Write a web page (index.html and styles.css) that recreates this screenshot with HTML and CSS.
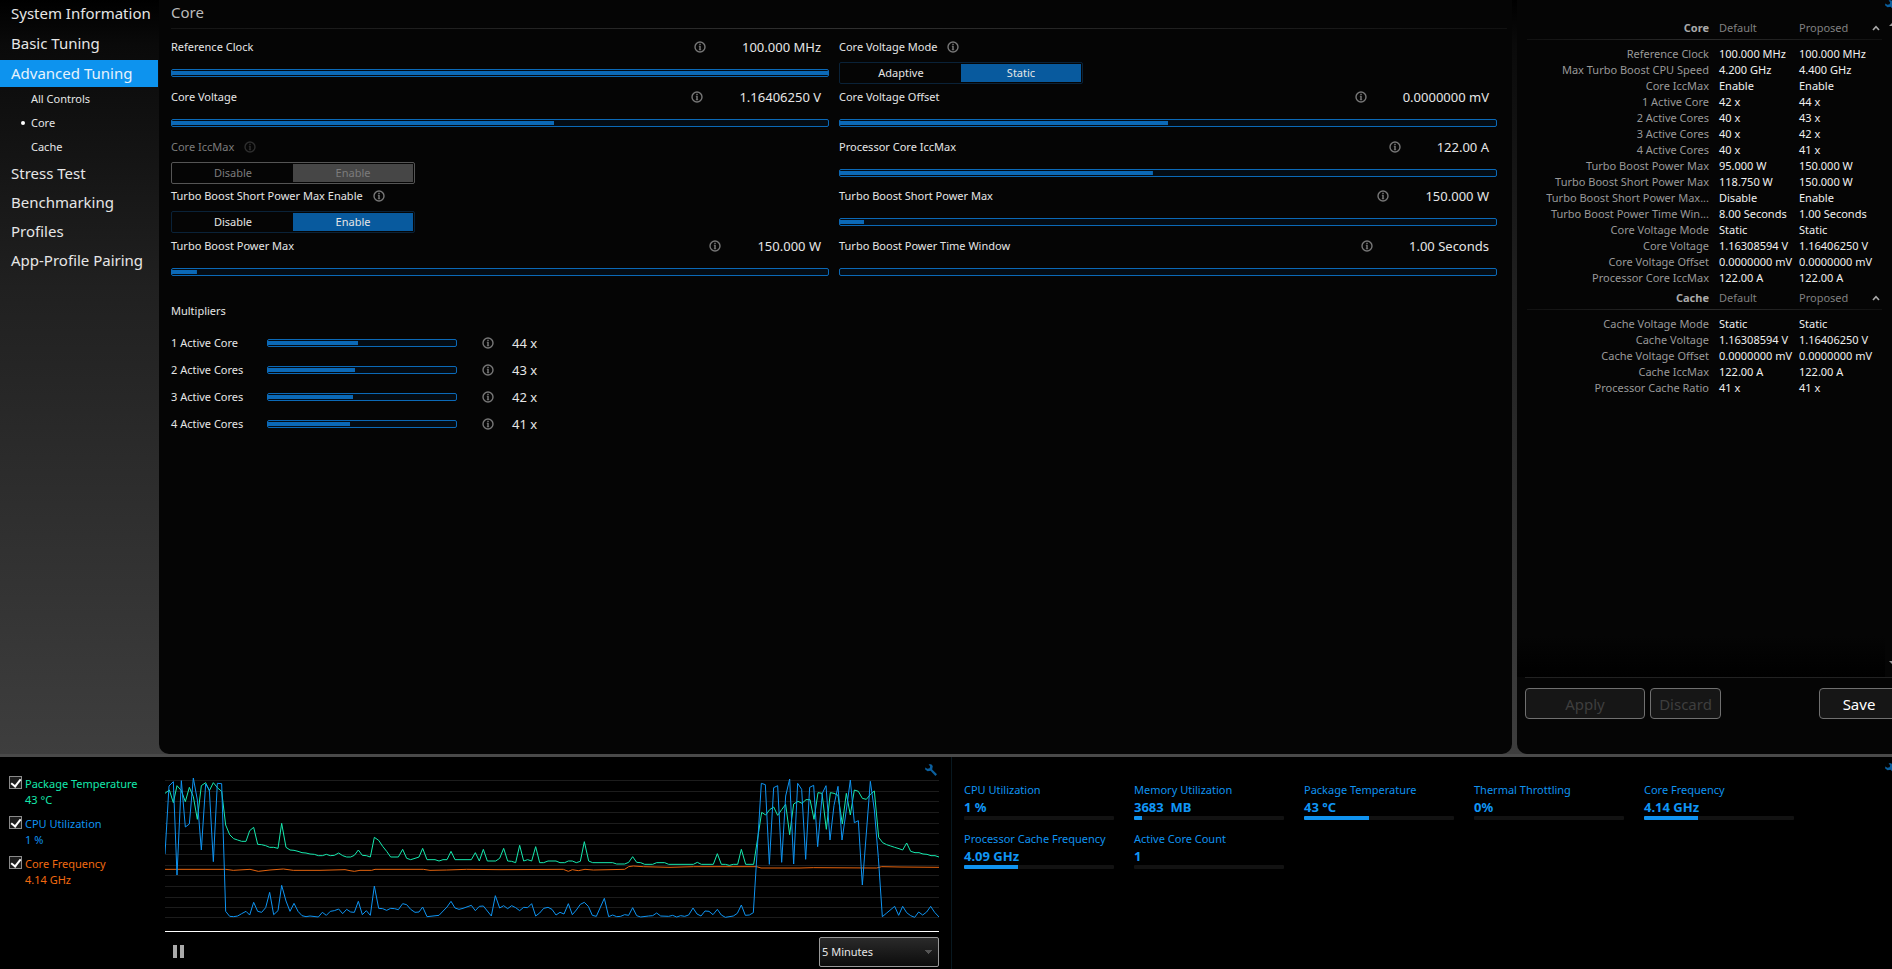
FILE: index.html
```html
<!DOCTYPE html>
<html lang="en">
<head>
<meta charset="utf-8">
<title>Advanced Tuning - Core</title>
<link rel="stylesheet" href="styles.css">
</head>
<body>
<svg class="defs" aria-hidden="true">
  <symbol id="info" viewBox="0 0 12 12"><circle cx="6" cy="6" r="5" fill="none" stroke="currentColor" stroke-width="1.4"/><path d="M6 5v4M6 2.800v1.400" fill="none" stroke="currentColor" stroke-width="1.5"/><path d="M4.800 5.300H6M4.800 8.800h2.400" fill="none" stroke="currentColor" stroke-width=".8"/></symbol>
  <symbol id="wrench" viewBox="0 0 12 12"><path d="M3.600.3H6.200L7.800 2 7.200 5.400 12 10.200 10.400 12 5.600 6.800 2.600 7.200.2 5.400V3.400L2.400 4.800 4.600 4.200 5.200 2.400Z" fill="currentColor"/></symbol>
  <symbol id="chevron" viewBox="0 0 8 6"><path d="M1 5 4 1.600 7 5" fill="none" stroke="currentColor" stroke-width="1.6"/></symbol>
</svg>
<div class="app">
  <div class="top">
    <nav class="sidebar">
      <a class="nav-item" href="#">System Information</a>
      <a class="nav-item" href="#">Basic Tuning</a>
      <a class="nav-item active" href="#">Advanced Tuning</a>
      <div class="subnav">
        <a class="sub-item" href="#">All Controls</a>
        <a class="sub-item current" href="#">Core</a>
        <a class="sub-item" href="#">Cache</a>
      </div>
      <a class="nav-item lower" href="#">Stress Test</a>
      <a class="nav-item lower" href="#">Benchmarking</a>
      <a class="nav-item lower" href="#">Profiles</a>
      <a class="nav-item lower" href="#">App-Profile Pairing</a>
    </nav>

    <main class="main">
      <h1 class="title">Core</h1>
      <div class="controls">
        <div class="column">
          <div class="control">
            <div class="head"><label for="clock">Reference Clock</label><svg class="info"><use href="#info"/></svg><output class="value">100.000 MHz</output></div>
            <input class="slider" id="clock" type="range" style="--fill:100%">
          </div>
          <div class="control">
            <div class="head"><label for="volt">Core Voltage</label><svg class="info"><use href="#info"/></svg><output class="value">1.16406250 V</output></div>
            <input class="slider" id="volt" type="range" style="--fill:58.3%">
          </div>
          <div class="control short disabled">
            <div class="head inline"><span>Core IccMax</span><svg class="info"><use href="#info"/></svg></div>
            <div class="toggle" role="group" aria-label="Core IccMax"><button disabled>Disable</button><button class="on" disabled>Enable</button></div>
          </div>
          <div class="control">
            <div class="head inline"><span>Turbo Boost Short Power Max Enable</span><svg class="info"><use href="#info"/></svg></div>
            <div class="toggle" role="group" aria-label="Turbo Boost Short Power Max Enable"><button>Disable</button><button class="on">Enable</button></div>
          </div>
          <div class="control">
            <div class="head"><label for="tbpm">Turbo Boost Power Max</label><svg class="info"><use href="#info"/></svg><output class="value">150.000 W</output></div>
            <input class="slider" id="tbpm" type="range" style="--fill:3.8%">
          </div>
        </div>
        <div class="column">
          <div class="control">
            <div class="head inline"><span>Core Voltage Mode</span><svg class="info"><use href="#info"/></svg></div>
            <div class="toggle" role="group" aria-label="Core Voltage Mode"><button>Adaptive</button><button class="on">Static</button></div>
          </div>
          <div class="control">
            <div class="head"><label for="offset">Core Voltage Offset</label><svg class="info"><use href="#info"/></svg><output class="value">0.0000000 mV</output></div>
            <input class="slider" id="offset" type="range" style="--fill:50%">
          </div>
          <div class="control short">
            <div class="head"><label for="icc">Processor Core IccMax</label><svg class="info"><use href="#info"/></svg><output class="value">122.00 A</output></div>
            <input class="slider" id="icc" type="range" style="--fill:47.7%">
          </div>
          <div class="control">
            <div class="head"><label for="tbsp">Turbo Boost Short Power Max</label><svg class="info"><use href="#info"/></svg><output class="value">150.000 W</output></div>
            <input class="slider" id="tbsp" type="range" style="--fill:3.7%">
          </div>
          <div class="control">
            <div class="head"><label for="window">Turbo Boost Power Time Window</label><svg class="info"><use href="#info"/></svg><output class="value">1.00 Seconds</output></div>
            <input class="slider" id="window" type="range" style="--fill:0%">
          </div>
        </div>
      </div>
      <section class="multipliers">
        <h2>Multipliers</h2>
        <div class="mult"><label for="m1">1 Active Core</label><input class="slider" id="m1" type="range" style="--fill:48%"><svg class="info"><use href="#info"/></svg><output class="value">44 x</output></div>
        <div class="mult"><label for="m2">2 Active Cores</label><input class="slider" id="m2" type="range" style="--fill:46.4%"><svg class="info"><use href="#info"/></svg><output class="value">43 x</output></div>
        <div class="mult"><label for="m3">3 Active Cores</label><input class="slider" id="m3" type="range" style="--fill:45.3%"><svg class="info"><use href="#info"/></svg><output class="value">42 x</output></div>
        <div class="mult"><label for="m4">4 Active Cores</label><input class="slider" id="m4" type="range" style="--fill:43.8%"><svg class="info"><use href="#info"/></svg><output class="value">41 x</output></div>
      </section>
    </main>

    <aside class="summary">
      <div class="summary-inner">
        <div class="lists">
          <table>
            <thead><tr><th class="name">Core</th><th>Default</th><th>Proposed<svg class="chevron"><use href="#chevron"/></svg></th></tr></thead>
            <tbody>
              <tr><th>Reference Clock</th><td>100.000 MHz</td><td>100.000 MHz</td></tr>
              <tr><th>Max Turbo Boost CPU Speed</th><td>4.200 GHz</td><td>4.400 GHz</td></tr>
              <tr><th>Core IccMax</th><td>Enable</td><td>Enable</td></tr>
              <tr><th>1 Active Core</th><td>42 x</td><td>44 x</td></tr>
              <tr><th>2 Active Cores</th><td>40 x</td><td>43 x</td></tr>
              <tr><th>3 Active Cores</th><td>40 x</td><td>42 x</td></tr>
              <tr><th>4 Active Cores</th><td>40 x</td><td>41 x</td></tr>
              <tr><th>Turbo Boost Power Max</th><td>95.000 W</td><td>150.000 W</td></tr>
              <tr><th>Turbo Boost Short Power Max</th><td>118.750 W</td><td>150.000 W</td></tr>
              <tr><th>Turbo Boost Short Power Max...</th><td>Disable</td><td>Enable</td></tr>
              <tr><th>Turbo Boost Power Time Win...</th><td>8.00 Seconds</td><td>1.00 Seconds</td></tr>
              <tr><th>Core Voltage Mode</th><td>Static</td><td>Static</td></tr>
              <tr><th>Core Voltage</th><td>1.16308594 V</td><td>1.16406250 V</td></tr>
              <tr><th>Core Voltage Offset</th><td>0.0000000 mV</td><td>0.0000000 mV</td></tr>
              <tr><th>Processor Core IccMax</th><td>122.00 A</td><td>122.00 A</td></tr>
            </tbody>
          </table>
          <table>
            <thead><tr><th class="name">Cache</th><th>Default</th><th>Proposed<svg class="chevron"><use href="#chevron"/></svg></th></tr></thead>
            <tbody>
              <tr><th>Cache Voltage Mode</th><td>Static</td><td>Static</td></tr>
              <tr><th>Cache Voltage</th><td>1.16308594 V</td><td>1.16406250 V</td></tr>
              <tr><th>Cache Voltage Offset</th><td>0.0000000 mV</td><td>0.0000000 mV</td></tr>
              <tr><th>Cache IccMax</th><td>122.00 A</td><td>122.00 A</td></tr>
              <tr><th>Processor Cache Ratio</th><td>41 x</td><td>41 x</td></tr>
            </tbody>
          </table>
        </div>
        <div class="rail">
          <svg class="wrench"><use href="#wrench"/></svg>
          <svg class="arrow" viewBox="0 0 8 4"><path d="M0 4 4 0 8 4Z" fill="#999"/></svg>
          <svg class="arrow down" viewBox="0 0 8 4"><path d="M0 0 4 4 8 0Z" fill="#999"/></svg>
        </div>
        <div class="actions">
          <button class="btn apply" disabled>Apply</button>
          <button class="btn discard" disabled>Discard</button>
          <button class="btn save">Save</button>
        </div>
      </div>
    </aside>
  </div>

  <div class="bottom">
    <section class="monitor">
      <div class="legend">
        <div class="series temp"><input type="checkbox" id="s1" checked><label for="s1">Package Temperature</label><span>43 °C</span></div>
        <div class="series cpu"><input type="checkbox" id="s2" checked><label for="s2">CPU Utilization</label><span>1 %</span></div>
        <div class="series freq"><input type="checkbox" id="s3" checked><label for="s3">Core Frequency</label><span>4.14 GHz</span></div>
      </div>
      <div class="graph">
        <svg class="wrench"><use href="#wrench"/></svg>
        <svg class="chart" viewBox="495 60 2322 516" preserveAspectRatio="none">
          <path class="grid" d="M495 121.500H2817M495 154.500H2817M495 184.500H2817M495 217.500H2817M495 250.500H2817M495 280.500H2817M495 313.500H2817M495 343.500H2817M495 376.500H2817M495 406.500H2817M495 439.500H2817M495 472.500H2817M495 502.500H2817M495 532.500H2817"/>
          <polyline class="line green" points="495,160 508,150 520,188 531,137 544,152 556,185 568,142 580,170 592,238 604,137 617,128 628,152 640,128 653,144 665,154 677,255 689,284 701,296 713,300 725,304 738,304 749,272 761,262 773,313 785,314 797,317 809,322 821,322 834,325 845,250 858,322 870,330 882,331 894,334 906,338 918,339 930,342 943,343 955,347 967,347 979,343 991,347 1003,346 1016,339 1028,347 1040,351 1052,351 1063,346 1075,330 1087,346 1099,347 1111,351 1123,292 1136,301 1148,319 1160,334 1172,351 1195,351 1208,328 1220,355 1232,359 1245,355 1257,351 1268,325 1281,359 1305,359 1317,363 1329,359 1341,359 1353,334 1365,359 1414,359 1426,338 1438,363 1450,328 1462,363 1487,363 1499,355 1511,325 1523,363 1535,364 1547,368 1559,316 1571,363 1583,359 1595,363 1607,320 1619,368 1631,368 1644,363 1668,363 1680,368 1694,368 1705,363 1717,363 1729,368 1741,364 1753,305 1766,363 1778,368 1838,368 1850,372 1874,372 1886,367 1898,350 1910,367 1922,368 1934,373 1958,373 1970,368 1994,368 2006,373 2080,373 2092,367 2104,373 2140,373 2152,341 2164,373 2176,373 2188,376 2200,373 2213,373 2224,328 2237,373 2261,373 2285,217 2297,225 2309,209 2321,201 2333,226 2345,209 2357,193 2369,284 2381,192 2394,184 2406,190 2418,179 2430,179 2442,238 2454,158 2466,160 2479,268 2491,158 2502,160 2514,166 2527,252 2539,160 2551,225 2563,150 2575,154 2587,175 2599,178 2612,162 2623,153 2636,292 2648,308 2660,314 2672,318 2684,322 2697,326 2708,330 2720,309 2732,334 2745,338 2757,338 2769,342 2781,343 2793,347 2805,347 2817,351"/>
          <polyline class="line orange" points="495,388 677,388 700,391 750,388 775,394 810,390 850,387 880,391 960,391 1035,389 1050,392 1063,394 1080,391 1115,391 1125,388 1270,388 1290,391 1340,390 1400,388 1500,389 1690,388 1705,394 1717,389 1735,392 1755,388 1780,390 1874,388 1886,380 1900,378 1930,380 2010,382 2080,380 2270,380 2283,384 2400,384 2440,383 2630,384 2645,380 2700,381 2817,382"/>
          <polyline class="line blue" points="495,342 507,138 520,125 531,405 544,122 556,261 568,252 580,114 592,180 604,330 617,132 628,150 640,365 652,130 665,131 677,514 689,529 701,530 713,528 725,521 738,514 749,525 761,487 773,514 785,517 797,503 809,457 821,524 834,512 845,436 858,483 870,514 882,490 894,514 906,527 918,530 930,528 955,531 967,517 979,526 991,514 1003,512 1016,507 1028,521 1040,508 1052,516 1063,517 1075,484 1087,524 1099,512 1111,526 1123,438 1136,505 1148,506 1160,511 1172,505 1184,506 1195,509 1208,491 1220,494 1232,508 1245,517 1257,516 1268,501 1281,530 1317,526 1341,501 1353,484 1365,504 1377,508 1389,505 1414,496 1426,512 1438,499 1450,498 1474,528 1486,467 1499,504 1511,497 1523,506 1535,497 1547,503 1559,512 1571,502 1583,503 1595,491 1607,528 1619,519 1631,505 1644,502 1656,508 1668,525 1680,517 1692,522 1705,491 1717,524 1729,510 1741,493 1753,487 1765,499 1777,526 1789,529 1813,475 1826,530 1838,525 1850,530 1862,529 1874,524 1886,526 1898,503 1910,527 1922,531 1946,528 1958,527 1970,519 1982,528 2006,529 2018,526 2030,531 2042,527 2054,529 2066,525 2079,504 2091,522 2103,528 2115,513 2127,514 2139,524 2152,508 2164,525 2176,532 2200,528 2212,520 2224,495 2236,526 2248,525 2260,518 2284,130 2296,134 2308,373 2321,143 2333,137 2345,367 2357,168 2369,117 2381,372 2393,130 2405,148 2417,358 2429,142 2441,136 2453,320 2467,160 2478,137 2490,300 2502,196 2514,139 2526,300 2539,210 2551,120 2563,248 2575,242 2587,435 2611,124 2623,210 2635,352 2647,530 2659,520 2684,499 2696,526 2708,499 2720,518 2732,527 2744,532 2756,516 2768,525 2780,516 2792,499 2804,517 2817,531"/>
        </svg>
        <div class="graph-foot">
          <button class="pause" aria-label="Pause"></button>
          <select class="range" aria-label="Time range"><option>5 Minutes</option></select>
        </div>
      </div>
    </section>
    <section class="metrics">
      <div class="metric-grid">
        <div class="metric"><span class="m-name">CPU Utilization</span><strong>1 %</strong><div class="bar"><i style="width:0%"></i></div></div>
        <div class="metric"><span class="m-name">Memory Utilization</span><strong>3683  MB</strong><div class="bar"><i style="width:5.3%"></i></div></div>
        <div class="metric"><span class="m-name">Package Temperature</span><strong>43 °C</strong><div class="bar"><i style="width:43.5%"></i></div></div>
        <div class="metric"><span class="m-name">Thermal Throttling</span><strong>0%</strong><div class="bar"><i style="width:0%"></i></div></div>
        <div class="metric"><span class="m-name">Core Frequency</span><strong>4.14 GHz</strong><div class="bar"><i style="width:36%"></i></div></div>
        <div class="metric"><span class="m-name">Processor Cache Frequency</span><strong>4.09 GHz</strong><div class="bar"><i style="width:36%"></i></div></div>
        <div class="metric"><span class="m-name">Active Core Count</span><strong>1</strong><div class="bar"><i style="width:0%"></i></div></div>
      </div>
      <svg class="wrench"><use href="#wrench"/></svg>
    </section>
  </div>
</div>
</body>
</html>
```
FILE: styles.css
```css
* { box-sizing: border-box; }

html, body { height: 100%; }

body {
  margin: 0;
  background: #000;
  color: #e6e6e6;
  font: 11px/16px "Noto Sans", "Open Sans", sans-serif;
  overflow: hidden;
}

button, select, input { font: inherit; color: inherit; margin: 0; }
a { color: inherit; text-decoration: none; }
svg { display: block; }
.defs { display: none; }

.app { display: flex; flex-direction: column; height: 100%; }

.top {
  flex: 1;
  min-height: 0;
  display: flex;
  background: linear-gradient(#000 0%, #0a0a0a 6%, #202020 38%, #3e3e3e 100%);
  border-bottom: 3px solid #4a4a4a;
}

/* Sidebar */
.sidebar { flex: 0 0 159px; padding-right: 1px; }
.nav-item {
  display: block;
  height: 27px;
  margin-bottom: 3px;
  padding-left: 11px;
  font-size: 15px;
  line-height: 26px;
  white-space: nowrap;
}
.nav-item.active { background: #0d93ee; margin-bottom: 0; color: #e6f2fc; }
.nav-item.lower { margin-bottom: 2px; }
.subnav { padding-bottom: 1px; }
.sub-item { display: flex; align-items: center; height: 24px; padding-left: 31px; }
.sub-item.current { padding-left: 21px; gap: 6px; }
.sub-item.current::before { content: ""; width: 4px; height: 4px; border-radius: 2px; background: #fff; }

/* Main panel */
.main {
  flex: 1;
  margin-right: 5px;
  padding: 0 15px 0 12px;
  background: #050505;
  border-radius: 0 0 10px 10px;
}
.title { margin: 0; font-size: 15px; font-weight: 400; line-height: 24px; color: #bbb; }
.title::after {
  content: "";
  display: block;
  height: 1px;
  margin: 4px -10px 0 0;
  background: linear-gradient(90deg, #151515, #303030 50%, #111);
}
.controls { display: grid; grid-template-columns: 1fr 1fr; gap: 10px; padding-top: 3px; }
.control { height: 50px; }
.control.short { height: 49px; }
.head { display: flex; align-items: center; height: 30px; padding-right: 8px; }
.head .info { margin-left: auto; }
.head .value { margin-left: 36px; }
.head.inline .info { margin-left: 10px; }
.info { width: 12px; height: 12px; color: #777; }
.value { font-size: 13px; }

.slider {
  appearance: none;
  display: block;
  width: 100%;
  height: 8px;
  border: 1px solid #0b69b7;
  border-radius: 2px;
  background: linear-gradient(#0b69b7, #0b69b7) 0 50% / var(--fill) 4px no-repeat #040c14;
}
.slider::-webkit-slider-thumb { appearance: none; width: 8px; height: 8px; background: transparent; }
.control .slider { margin-top: 7px; }

.toggle {
  display: flex;
  width: 244px;
  height: 22px;
  padding: 1px;
  border: 1px solid #0a2238;
  border-radius: 2px;
}
.toggle button { flex: 1; padding: 0; border: 0; background: none; line-height: 18px; }
.toggle .on { background: #085a9e; }
.disabled { color: #7c7c7c; }
.disabled .info { color: #2e2e2e; }
.disabled .toggle { border-color: #555; }
.disabled .toggle .on { background: #464646; }

.multipliers { padding-top: 22px; }
.multipliers h2 { margin: 0 0 10px; font-size: 11px; font-weight: 400; line-height: 16px; }
.mult { display: flex; align-items: center; height: 27px; }
.mult label { width: 96px; }
.mult .slider { width: 190px; }
.mult .info { margin: 0 18px 0 25px; }

/* Summary panel */
.summary { flex: 0 0 375px; background: #050505; border-radius: 0 0 0 10px; overflow: hidden; }
.summary-inner {
  width: calc(100% + 7px);
  height: 100%;
  display: grid;
  grid-template: 1fr auto / 1fr 14px;
}
.lists { padding: 17px 0 0 10px; background: linear-gradient(#050505 94%, #000) 0 0 / 100% 100%; }
.lists table { width: 355px; border-collapse: collapse; table-layout: fixed; }
.lists th, .lists td { padding: 0; font-weight: 400; text-align: left; white-space: nowrap; height: 16px; line-height: 16px; }
.lists td { color: #f0f0f0; }
.lists th { color: #808080; width: 80px; }
.lists th:first-child { width: 192px; padding-right: 10px; text-align: right; color: #999; }
.lists th:last-child { width: auto; }
.lists thead th { height: 29px; padding-bottom: 7px; }
.lists thead .name { font-weight: 700; color: #aaa; }
.lists thead tr { background: linear-gradient(90deg, #111, #2c2c2c 50%, #111) 0 22px / 100% 1px no-repeat; }
.lists .chevron { float: right; width: 8px; height: 6px; margin: 5px 2px 0 0; color: #aaa; }
.lists table + table { margin-top: 1px; }
.wrench { width: 12px; height: 12px; color: #0b5f9e; }
.rail { display: flex; flex-direction: column; }
.arrow { width: 8px; height: 4px; margin: 10px 0 0 4px; }
.arrow.down { margin: auto 0 12px 4px; }
.actions {
  grid-column: 1 / 3;
  display: flex;
  gap: 5px;
  margin-left: 8px;
  padding: 10px 0 35px;
  border-top: 1px solid #222;
}
.btn {
  height: 31px;
  border: 1px solid #707070;
  border-radius: 4px;
  background: #161616;
  font-size: 15px;
}
.btn:disabled { color: #3e3e3e; }
.apply { width: 120px; }
.discard { width: 71px; padding: 0; }
.save { width: 80px; margin-left: auto; color: #fff; }

/* Bottom strip */
.bottom { display: flex; height: 212px; }
.monitor { flex: 1; display: flex; padding-right: 12px; border-right: 1px solid #081820; }
.legend { width: 165px; padding: 19px 0 0 9px; }
.series { display: grid; grid-template-columns: 13px 1fr; column-gap: 3px; height: 40px; grid-template-rows: 16px 16px; }
.series span { grid-column: 2; }
.series input {
  appearance: none;
  width: 13px;
  height: 13px;
  border: 1px solid #8a8a8a;
  background: #1c1c1c;
  display: grid;
  place-items: center;
}
.series input::before {
  content: "";
  width: 4px;
  height: 8px;
  margin-top: -2px;
  border: solid #fff;
  border-width: 0 2px 2px 0;
  transform: rotate(38deg);
}
.temp { color: #14e8ac; }
.cpu { color: #0f93f0; }
.freq { color: #f26a10; }

.graph { flex: 1; position: relative; padding-top: 3px; }
.graph .wrench { position: absolute; top: 7px; right: 2px; }
.chart { width: 100%; height: 172px; }
.chart path, .chart polyline { fill: none; stroke-width: 1px; vector-effect: non-scaling-stroke; }
.chart .grid { stroke: #1c1c1c; }
.chart .green { stroke: #16e8ae; }
.chart .orange { stroke: #e6640e; }
.chart .blue { stroke: #0e94f2; }
.graph-foot {
  display: flex;
  justify-content: space-between;
  align-items: flex-start;
  margin-top: -1px;
  padding: 5px 0 0 8px;
  border-top: 1px solid #fff;
}
.pause { width: 11px; height: 13px; margin-top: 8px; padding: 0; border: solid #aaa; border-width: 0 4px; background: none; }
.range {
  appearance: none;
  width: 120px;
  height: 30px;
  padding: 0 2px;
  border: 1px solid #999;
  border-radius: 2px;
  color: #e6e6e6;
  background:
    linear-gradient(to bottom left, #555 50%, transparent 50%) 105px 12px / 4px 4px no-repeat,
    linear-gradient(to bottom right, #555 50%, transparent 50%) 109px 12px / 4px 4px no-repeat,
    linear-gradient(#2a2a2a, #0c0c0c);
}

.metrics { flex: 0 0 940px; display: flex; justify-content: space-between; padding: 25px 0 0 12px; overflow: hidden; }
.metric-grid { display: grid; grid-template-columns: repeat(5, 150px); grid-auto-rows: 49px; column-gap: 20px; align-content: start; }
.metrics > .wrench { flex: none; margin: -19px -5px 0 0; }
.metric { color: #0f93f0; }
.metric strong { display: block; font-size: 13px; line-height: 18px; color: #1096f6; white-space: pre; }
.m-name { display: block; white-space: nowrap; }
.bar { height: 4px; background: #121212; border-radius: 1px; overflow: hidden; }
.bar i { display: block; height: 100%; background: #1093f0; }
```
